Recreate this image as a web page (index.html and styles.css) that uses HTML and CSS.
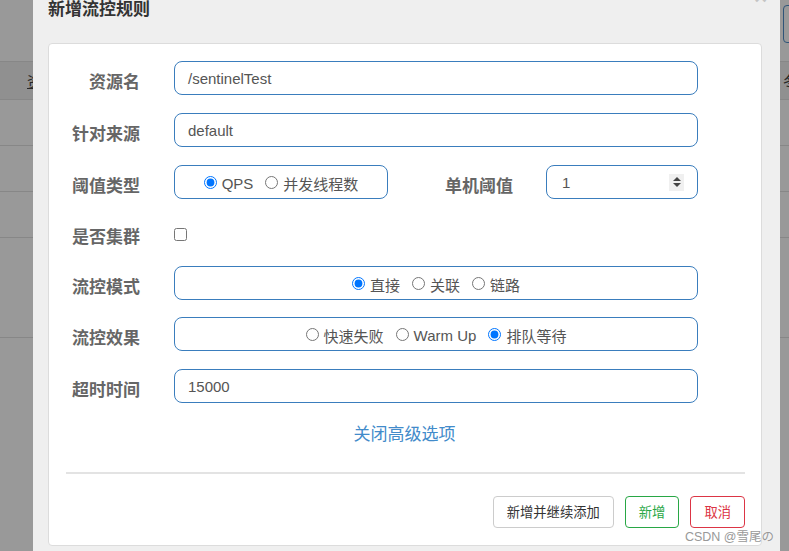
FILE: index.html
```html
<!DOCTYPE html>
<html lang="zh-CN">
<head>
<meta charset="utf-8">
<title>新增流控规则</title>
<link rel="stylesheet" href="styles.css">
</head>
<body>
<div class="page">
  <div class="topbar"><span class="topbtn"></span></div>
  <div class="thead"><span class="th-left">资</span><span class="th-right">冬</span></div>
  <div class="tr"></div>
  <div class="tr"></div>
  <div class="tr"></div>
  <div class="tr tall"></div>
</div>

<div class="modal">
  <div class="modal-header">
    <h4 class="title">新增流控规则</h4>
    <span class="close">×</span>
  </div>
  <div class="card">
    <form class="form">
      <div class="row">
        <label class="lbl">资源名</label>
        <div class="ctrl"><div class="input">/sentinelTest</div></div>
      </div>
      <div class="row">
        <label class="lbl">针对来源</label>
        <div class="ctrl"><div class="input">default</div></div>
      </div>
      <div class="row">
        <label class="lbl">阈值类型</label>
        <div class="opts opts-qps">
          <label class="opt"><input type="radio" name="grade" checked><span>QPS</span></label>
          <label class="opt"><input type="radio" name="grade"><span>并发线程数</span></label>
        </div>
        <label class="lbl lbl2">单机阈值</label>
        <div class="input num"><span>1</span><span class="spin"><i class="up"></i><i class="down"></i></span></div>
      </div>
      <div class="row row-check">
        <label class="lbl">是否集群</label>
        <input class="chk" type="checkbox">
      </div>
      <div class="row row-tight">
        <label class="lbl">流控模式</label>
        <div class="opts wide">
          <label class="opt"><input type="radio" name="mode" checked><span>直接</span></label>
          <label class="opt"><input type="radio" name="mode"><span>关联</span></label>
          <label class="opt"><input type="radio" name="mode"><span>链路</span></label>
        </div>
      </div>
      <div class="row">
        <label class="lbl">流控效果</label>
        <div class="opts wide">
          <label class="opt"><input type="radio" name="effect"><span>快速失败</span></label>
          <label class="opt"><input type="radio" name="effect"><span>Warm Up</span></label>
          <label class="opt"><input type="radio" name="effect" checked><span>排队等待</span></label>
        </div>
      </div>
      <div class="row">
        <label class="lbl">超时时间</label>
        <div class="ctrl"><div class="input">15000</div></div>
      </div>
    </form>
    <div class="adv"><a class="link">关闭高级选项</a></div>
    <div class="sep"></div>
    <div class="footer">
      <button class="btn btn-default" type="button">新增并继续添加</button>
      <button class="btn btn-ok" type="button">新增</button>
      <button class="btn btn-cancel" type="button">取消</button>
    </div>
  </div>
</div>
<div class="watermark">CSDN @雪尾の</div>
</body>
</html>
```

FILE: styles.css
```css
html, body {
  margin: 0;
  padding: 0;
}
body {
  width: 789px;
  height: 551px;
  overflow: hidden;
  background: #999999;
  font-family: "Liberation Sans", "Noto Sans CJK SC", sans-serif;
  position: relative;
}

/* underlying page seen through the backdrop */
.page {
  display: flex;
  flex-direction: column;
}
.topbar {
  height: 61px;
  border-bottom: 1px solid #878787;
  display: flex;
  justify-content: flex-end;
}
.topbtn {
  width: 30px;
  height: 36px;
  margin-top: 5px;
  margin-right: -26px;
  border: 1px solid #2f5478;
  border-radius: 4px;
}
.thead {
  height: 37px;
  background: #909090;
  border-bottom: 1px solid #878787;
  display: flex;
  justify-content: space-between;
  align-items: center;
  font-size: 15px;
  color: #262626;
  font-family: "Noto Sans CJK SC", sans-serif;
}
.th-left {
  padding-left: 27px;
  text-decoration: underline;
}
.th-right {
  margin-right: -9px;
}
.tr {
  height: 45px;
  border-bottom: 1px solid #878787;
}
.tr.tall {
  height: 99px;
}

/* modal */
.modal {
  position: absolute;
  left: 33px;
  top: -12px;
  bottom: 0;
  width: 747px;
  background: #efefef;
}
.modal-header {
  height: 55px;
  box-sizing: border-box;
  padding: 10px 15px 0 15px;
  position: relative;
}
.title {
  margin: 0;
  font-size: 17px;
  line-height: 20px;
  font-weight: bold;
  color: #333333;
  font-family: "Noto Sans CJK SC", sans-serif;
}
.close {
  position: absolute;
  right: 13px;
  top: -1px;
  font-size: 22px;
  line-height: 20px;
  font-weight: bold;
  color: #c4c4c4;
}

.card {
  margin: 0 18px 0 15px;
  height: 503px;
  box-sizing: border-box;
  background: #ffffff;
  border: 1px solid #dcdcdc;
  border-radius: 4px;
}
.form {
  padding: 17px 63px 0 0;
  margin: 0;
}
.row {
  display: flex;
  align-items: center;
  margin-bottom: 18px;
  min-height: 34px;
}
.row-tight {
  margin-bottom: 17px;
}
.lbl {
  width: 91px;
  flex: none;
  text-align: right;
  font-size: 17px;
  line-height: 20px;
  padding-top: 5px;
  font-weight: bold;
  color: #666666;
  font-family: "Noto Sans CJK SC", sans-serif;
  margin-right: 34px;
}
.lbl2 {
  width: 125px;
  margin-right: 33px;
}
.ctrl {
  flex: 1;
}
.input {
  height: 34px;
  box-sizing: border-box;
  border: 1px solid #3a7dbd;
  border-radius: 8px;
  padding: 0 13px;
  display: flex;
  align-items: center;
  font-size: 15px;
  color: #555555;
}
.num {
  width: 152px;
  flex: none;
  padding-right: 13px;
  justify-content: space-between;
  padding-left: 15px;
}
.spin {
  width: 15px;
  height: 17px;
  background: #f0f0f0;
  display: flex;
  flex-direction: column;
  align-items: center;
  justify-content: center;
  gap: 2px;
}
.spin i {
  display: block;
  width: 0;
  height: 0;
  border-left: 4px solid transparent;
  border-right: 4px solid transparent;
}
.spin .up {
  border-bottom: 4px solid #444444;
}
.spin .down {
  border-top: 4px solid #444444;
}

.opts {
  height: 34px;
  box-sizing: border-box;
  border: 1px solid #3a7dbd;
  border-radius: 8px;
  display: flex;
  justify-content: center;
  align-items: center;
  padding-top: 3px;
  font-size: 15px;
  color: #555555;
}
.opts-qps {
  width: 214px;
  flex: none;
}
.opts.wide {
  flex: 1;
}
.opt {
  display: inline-flex;
  align-items: center;
  gap: 5px;
  margin: 0 6px;
  font-family: "Liberation Sans", "Noto Sans CJK SC", sans-serif;
}
.opt input {
  margin: 0;
  width: 13px;
  height: 13px;
  position: relative;
  top: -1px;
}

.row-check {
  min-height: 31px;
  height: 31px;
  padding-top: 4px;
  box-sizing: border-box;
}
.row-check .lbl {
  padding-top: 3px;
}
.chk {
  margin: 0;
  width: 13px;
  height: 13px;
}

.adv {
  text-align: center;
  padding-right: 1px;
}
.link {
  font-size: 17px;
  line-height: 24px;
  color: #428bca;
  font-family: "Noto Sans CJK SC", sans-serif;
  text-decoration: none;
}
.sep {
  margin: 27px 16px 0 17px;
  height: 2px;
  background: #e3e3e3;
}
.footer {
  display: flex;
  justify-content: flex-end;
  gap: 11px;
  margin-top: 22px;
  padding-right: 16px;
}
.btn {
  height: 32px;
  box-sizing: border-box;
  padding: 0 13px;
  border-radius: 4px;
  background: #ffffff;
  font-size: 13.3px;
  font-family: "Noto Sans CJK SC", sans-serif;
  line-height: 1;
}
.btn-default {
  border: 1px solid #cccccc;
  color: #333333;
}
.btn-ok {
  border: 1px solid #28a745;
  color: #28a745;
}
.btn-cancel {
  border: 1px solid #dc3545;
  color: #dc3545;
}

.watermark {
  position: absolute;
  right: 15px;
  bottom: 6px;
  font-size: 12.5px;
  color: #999999;
  font-family: "Liberation Sans", "Noto Sans CJK SC", sans-serif;
  text-shadow: 0 0 2px #ffffff;
}
```
